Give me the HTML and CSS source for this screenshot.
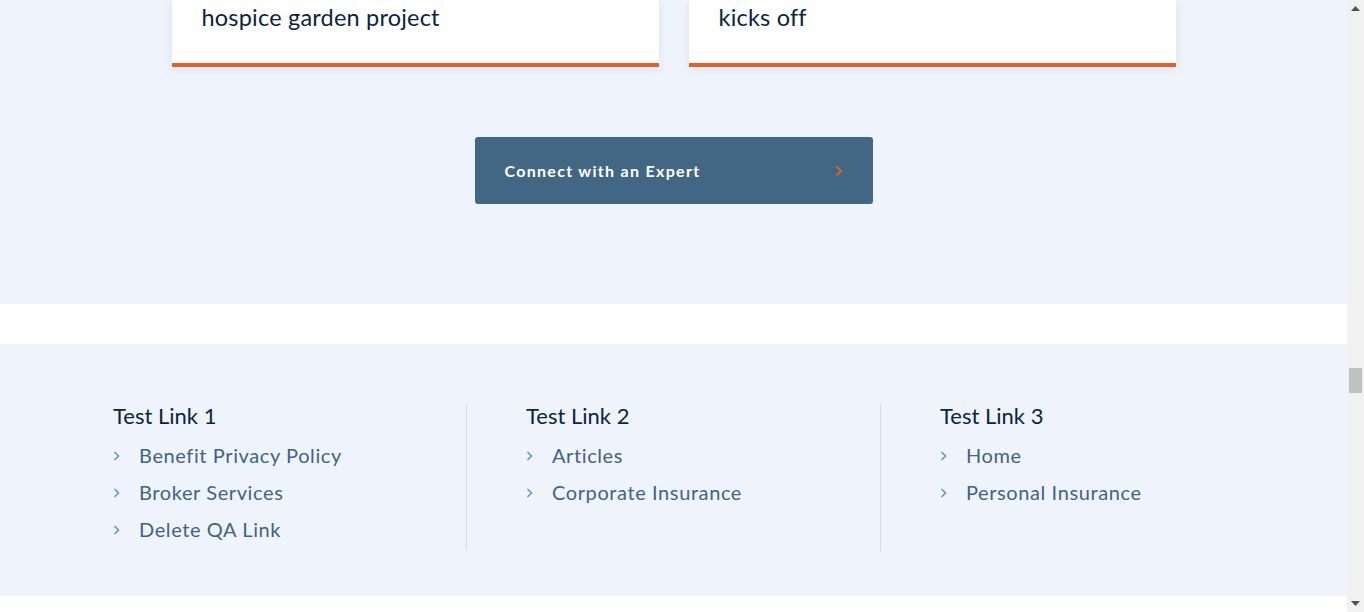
FILE: index.html
```html
<!DOCTYPE html>
<html lang="en">
<head>
<meta charset="utf-8">
<title>Footer</title>
<link rel="stylesheet" href="styles.css">
</head>
<body>
  <div class="page">
    <section class="news">
      <div class="cards">
        <article class="card"><p class="card-title">hospice garden project</p></article>
        <article class="card"><p class="card-title">kicks off</p></article>
      </div>
      <a class="cta" href="#">
        <span>Connect with an Expert</span>
        <svg class="cta-arrow" width="8" height="12" viewBox="0 0 8 12" aria-hidden="true"><path d="M1.5 1.5 L6 6 L1.5 10.5" fill="none" stroke="#e0622a" stroke-width="1.8"/></svg>
      </a>
    </section>
    <div class="spacer"></div>
    <footer class="footer">
      <div class="cols">
        <div class="col">
          <h3 class="col-title">Test Link 1</h3>
          <ul class="links">
            <li><svg class="chev" width="7" height="10" viewBox="0 0 7 10"><path d="M1.5 1 L5.5 5 L1.5 9" fill="none" stroke="#5a9ad6" stroke-width="1.6"/></svg><a href="#">Benefit Privacy Policy</a></li>
            <li><svg class="chev" width="7" height="10" viewBox="0 0 7 10"><path d="M1.5 1 L5.5 5 L1.5 9" fill="none" stroke="#5a9ad6" stroke-width="1.6"/></svg><a href="#">Broker Services</a></li>
            <li><svg class="chev" width="7" height="10" viewBox="0 0 7 10"><path d="M1.5 1 L5.5 5 L1.5 9" fill="none" stroke="#5a9ad6" stroke-width="1.6"/></svg><a href="#">Delete QA Link</a></li>
          </ul>
        </div>
        <div class="col">
          <h3 class="col-title">Test Link 2</h3>
          <ul class="links">
            <li><svg class="chev" width="7" height="10" viewBox="0 0 7 10"><path d="M1.5 1 L5.5 5 L1.5 9" fill="none" stroke="#5a9ad6" stroke-width="1.6"/></svg><a href="#">Articles</a></li>
            <li><svg class="chev" width="7" height="10" viewBox="0 0 7 10"><path d="M1.5 1 L5.5 5 L1.5 9" fill="none" stroke="#5a9ad6" stroke-width="1.6"/></svg><a href="#">Corporate Insurance</a></li>
          </ul>
        </div>
        <div class="col">
          <h3 class="col-title">Test Link 3</h3>
          <ul class="links">
            <li><svg class="chev" width="7" height="10" viewBox="0 0 7 10"><path d="M1.5 1 L5.5 5 L1.5 9" fill="none" stroke="#5a9ad6" stroke-width="1.6"/></svg><a href="#">Home</a></li>
            <li><svg class="chev" width="7" height="10" viewBox="0 0 7 10"><path d="M1.5 1 L5.5 5 L1.5 9" fill="none" stroke="#5a9ad6" stroke-width="1.6"/></svg><a href="#">Personal Insurance</a></li>
          </ul>
        </div>
      </div>
    </footer>
    <div class="bottom"></div>
  </div>
  <div class="scrollbar" aria-hidden="true">
    <div class="sb-btn"><svg width="9" height="5" viewBox="0 0 9 5"><path d="M0 5 L4.5 0 L9 5 Z" fill="#505050"/></svg></div>
    <div class="sb-track"><div class="sb-thumb" style="margin-top: 351px"></div></div>
    <div class="sb-btn"><svg width="9" height="5" viewBox="0 0 9 5"><path d="M0 0 L9 0 L4.5 5 Z" fill="#505050"/></svg></div>
  </div>
</body>
</html>
```
FILE: styles.css
```css
html, body {
  height: 100%;
}
body {
  margin: 0;
  background: #ffffff;
  font-family: "Lato", "Open Sans", sans-serif;
  color: #0a2540;
  display: flex;
  overflow: hidden;
}
.page {
  flex: 1;
  min-width: 0;
}
.scrollbar {
  width: 17px;
  flex: none;
  background: #f1f1f1;
  display: flex;
  flex-direction: column;
}
.sb-btn {
  height: 17px;
  display: flex;
  align-items: center;
  justify-content: center;
}
.sb-track {
  flex: 1;
  display: flex;
  flex-direction: column;
  align-items: center;
}
.sb-thumb {
  width: 13px;
  height: 25px;
  background: #c1c1c1;
}
.news {
  background: #eff4fc;
  display: flex;
  flex-direction: column;
  align-items: center;
  padding-bottom: 100px;
}
.cards {
  display: flex;
  gap: 30px;
  width: 1004px;
}
.card {
  flex: 1;
  background: #ffffff;
  border-bottom: 4px solid #e0622a;
  box-shadow: 0 2px 10px rgba(40, 70, 120, 0.10);
  padding: 0 30px 29px;
}
.card-title {
  margin: 0;
  font-size: 23.5px;
  line-height: 34px;
  color: #0a2540;
  letter-spacing: 0.2px;
}
.cta {
  margin-top: 70px;
  width: 398px;
  height: 67px;
  box-sizing: border-box;
  padding: 0 30px;
  background: #426784;
  border-radius: 3px;
  display: flex;
  align-items: center;
  justify-content: space-between;
  color: #ffffff;
  text-decoration: none;
  font-size: 16px;
  font-weight: 700;
  letter-spacing: 1.3px;
}
.spacer {
  height: 40px;
}
.footer {
  background: #eff4fc;
  padding: 60px 0 45px;
}
.cols {
  width: 1241px;
  margin: 0 auto;
  display: grid;
  grid-template-columns: 413px 414px 414px;
}
.col {
  padding-left: 60px;
  min-height: 147px;
}
.col + .col {
  border-left: 1px solid #d6dde5;
  padding-left: 59px;
}
.col-title {
  margin: 0;
  font-size: 22px;
  font-weight: 400;
  line-height: 24px;
  color: #0a2540;
}
.links {
  list-style: none;
  margin: 8px 0 0;
  padding: 0;
}
.links li {
  display: flex;
  align-items: center;
  height: 37px;
}
.chev {
  flex: none;
  margin: 2px 19px 0 0;
}
.links a {
  color: #3f6385;
  text-decoration: none;
  font-size: 20px;
  letter-spacing: 0.6px;
}
.bottom {
  height: 16px;
}
```
